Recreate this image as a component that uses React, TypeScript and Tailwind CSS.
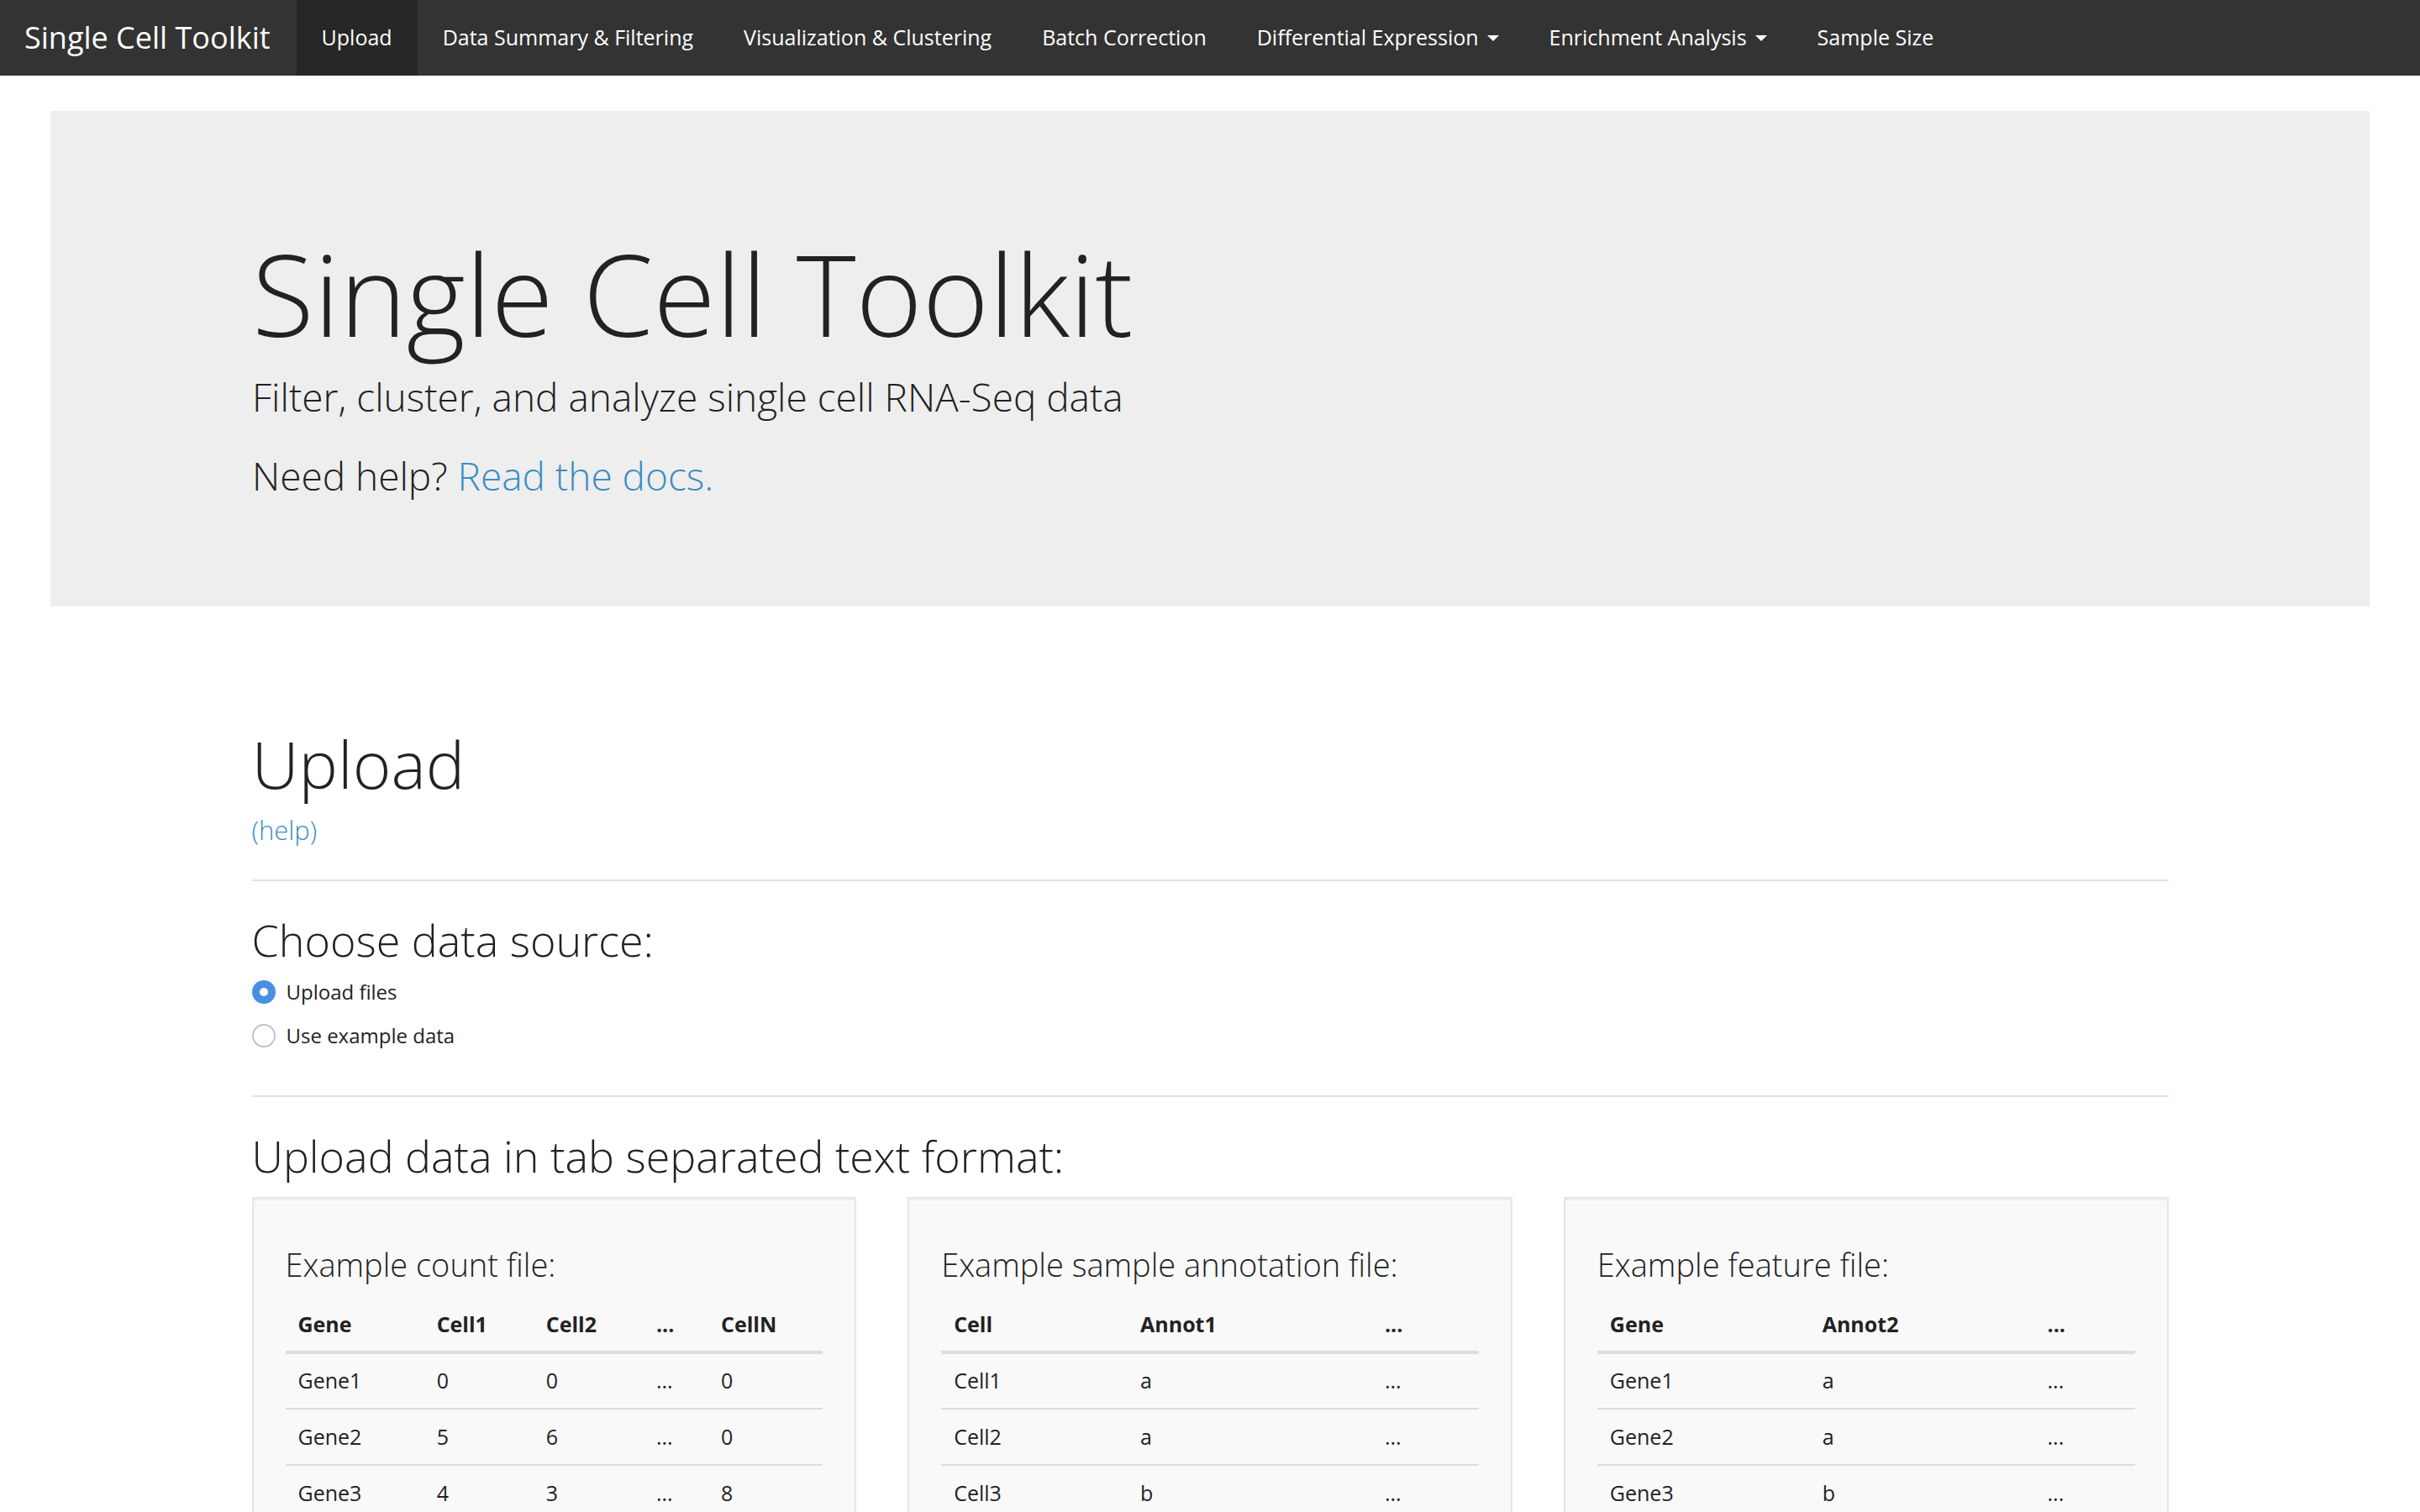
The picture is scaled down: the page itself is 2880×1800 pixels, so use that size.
import React from 'react';

const navItems = [
    { label: 'Upload', active: true },
    { label: 'Data Summary & Filtering' },
    { label: 'Visualization & Clustering' },
    { label: 'Batch Correction' },
    { label: 'Differential Expression', caret: true },
    { label: 'Enrichment Analysis', caret: true },
    { label: 'Sample Size' },
];

type Table = { title: string; widths: string[]; head: string[]; rows: string[][] };

const tables: Table[] = [
    {
        title: 'Example count file:',
        widths: ['w-[165px]', 'w-[130px]', 'w-[131px]', 'w-[77px]', 'w-[136px]'],
        head: ['Gene', 'Cell1', 'Cell2', '...', 'CellN'],
        rows: [
            ['Gene1', '0', '0', '...', '0'],
            ['Gene2', '5', '6', '...', '0'],
            ['Gene3', '4', '3', '...', '8'],
            ['...', '...', '...', '...', '...'],
        ],
    },
    {
        title: 'Example sample annotation file:',
        widths: ['w-[222px]', 'w-[291px]', 'w-[127px]'],
        head: ['Cell', 'Annot1', '...'],
        rows: [
            ['Cell1', 'a', '...'],
            ['Cell2', 'a', '...'],
            ['Cell3', 'b', '...'],
            ['...', '...', '...'],
        ],
    },
    {
        title: 'Example feature file:',
        widths: ['w-[253px]', 'w-[268px]', 'w-[119px]'],
        head: ['Gene', 'Annot2', '...'],
        rows: [
            ['Gene1', 'a', '...'],
            ['Gene2', 'a', '...'],
            ['Gene3', 'b', '...'],
            ['...', '...', '...'],
        ],
    },
];

function Radio({ checked, label }: { checked?: boolean; label: string }) {
    return (
        <label className="flex items-center h-[40px] gap-[13px]">
            {checked ? (
                <span className="w-[28px] h-[28px] rounded-full bg-[#4a90e2] flex items-center justify-center">
                    <span className="w-[10px] h-[10px] rounded-full bg-white" />
                </span>
            ) : (
                <span className="w-[28px] h-[28px] rounded-full bg-white border-2 border-[#c4c4c4]" />
            )}
            <span className="text-[24px]">{label}</span>
        </label>
    );
}

function ExampleWell({ table }: { table: Table }) {
    return (
        <div className="bg-[#f9f9f9] border-2 border-[#e6e6e6] shadow-[inset_0_2px_2px_rgba(0,0,0,0.05)] px-[38px] pt-[53px] pb-[40px]">
            <h4 className="text-[38px] font-light leading-[50px] mb-[15px]">{table.title}</h4>
            <table className="w-full text-[25px] border-collapse">
                <thead>
                    <tr className="border-b-4 border-[#dddddd]">
                        {table.head.map((h, i) => (
                            <th key={i} className={`${table.widths[i]} text-left font-bold px-[15px] h-[65px]`}>
                                {h}
                            </th>
                        ))}
                    </tr>
                </thead>
                <tbody>
                    {table.rows.map((row, r) => (
                        <tr key={r} className="border-t-2 border-[#dddddd] first:border-t-0">
                            {row.map((c, i) => (
                                <td key={i} className="px-[15px] h-[67px]">
                                    {c}
                                </td>
                            ))}
                        </tr>
                    ))}
                </tbody>
            </table>
        </div>
    );
}

export default function App() {
    return (
        <div className="min-h-screen bg-white text-[#222222] font-['Open_Sans',sans-serif]">
            {/* Navbar */}
            <nav className="h-[90px] bg-[#333333] flex items-stretch text-white">
                <div className="flex items-center pl-[29px] pr-[31px] text-[36px]">Single Cell Toolkit</div>
                {navItems.map((item) => (
                    <div
                        key={item.label}
                        className={`flex items-center px-[30px] text-[25px] ${item.active ? 'bg-[#272727]' : ''}`}
                    >
                        {item.label}
                        {item.caret && (
                            <span className="ml-[10px] w-0 h-0 border-l-[7px] border-r-[7px] border-t-[7px] border-l-transparent border-r-transparent border-t-white" />
                        )}
                    </div>
                ))}
            </nav>

            {/* Jumbotron */}
            <div className="mx-[60px] mt-[42px] bg-[#eeeeee] pl-[240px] pt-[143px] pb-[126px]">
                <h1 className="text-[135px] font-light leading-[148px]">Single Cell Toolkit</h1>
                <p className="text-[46px] font-light leading-[60px] mt-[19px]">
                    Filter, cluster, and analyze single cell RNA-Seq data
                </p>
                <p className="text-[46px] font-light leading-[60px] mt-[34px]">
                    Need help? <a className="text-[#3b8dc4]">Read the docs.</a>
                </p>
            </div>

            {/* Upload section */}
            <div className="w-[2281px] mx-auto">
                <h1 className="text-[78px] font-light leading-[88px] mt-[143px]">Upload</h1>
                <a className="block text-[31px] leading-[40px] mt-[15px] text-[#3b8dc4] font-light">(help)</a>
                <hr className="mt-[39px] border-0 h-[2px] bg-[#e2e2e2]" />

                <h3 className="text-[52px] font-light leading-[62px] mt-[39px]">Choose data source:</h3>
                <div className="mt-[11px] flex flex-col gap-[12px]">
                    <Radio checked label="Upload files" />
                    <Radio label="Use example data" />
                </div>
                <hr className="mt-[51px] border-0 h-[2px] bg-[#e2e2e2]" />

                <h3 className="text-[52px] font-light leading-[62px] mt-[39px]">
                    Upload data in tab separated text format:
                </h3>
                <div className="mt-[18px] grid grid-cols-3 gap-[61px]">
                    {tables.map((t) => (
                        <ExampleWell key={t.title} table={t} />
                    ))}
                </div>
            </div>
        </div>
    );
}
